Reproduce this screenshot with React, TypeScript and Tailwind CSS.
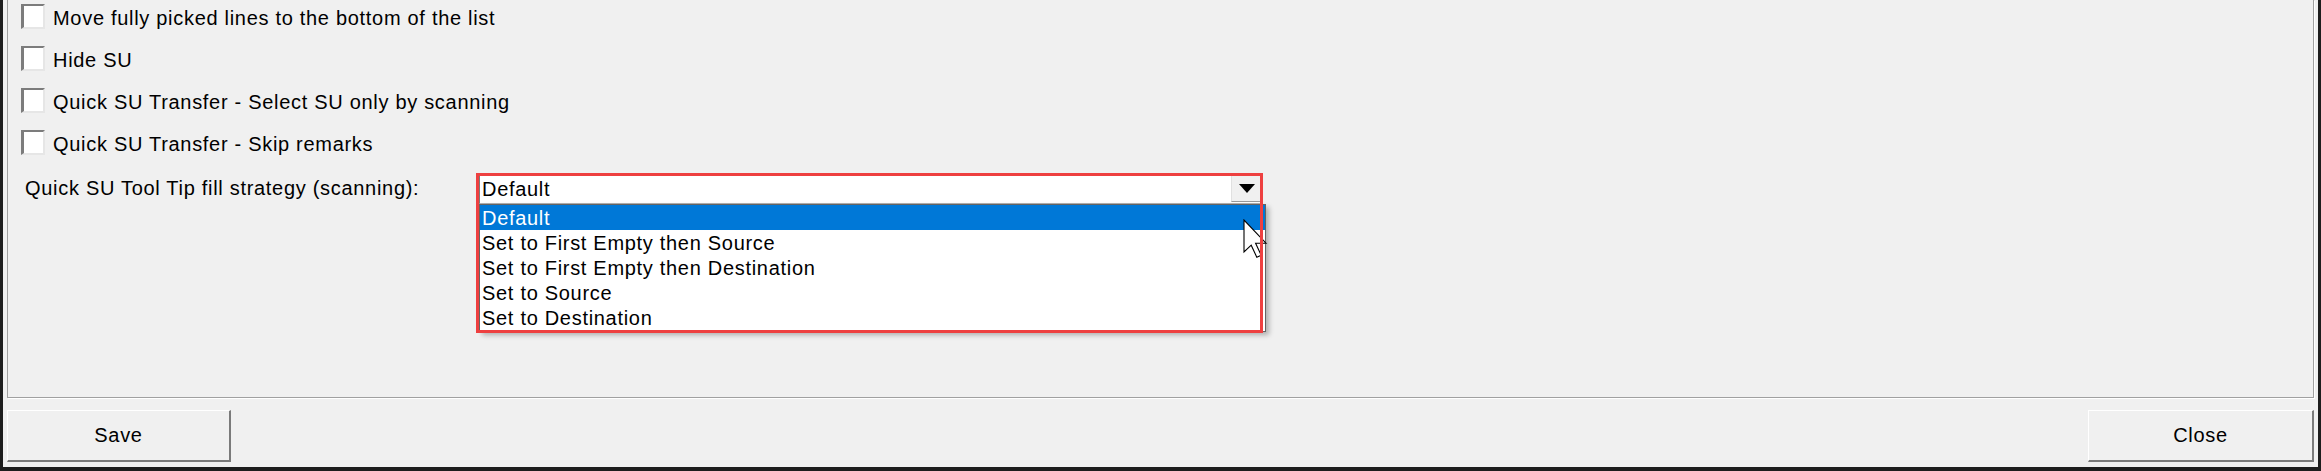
import React from "react";

const checkboxLabels = [
  "Move fully picked lines to the bottom of the list",
  "Hide SU",
  "Quick SU Transfer - Select SU only by scanning",
  "Quick SU Transfer - Skip remarks",
];

const strategyOptions = [
  "Default",
  "Set to First Empty then Source",
  "Set to First Empty then Destination",
  "Set to Source",
  "Set to Destination",
];

function CheckBox({ label }: { label: string }) {
  return (
    <div className="flex items-start h-[26px]">
      <div className="w-[24px] h-[25px] bg-white border-t-2 border-l-[3px] border-b-2 border-r-2 border-t-[#7c7c7c] border-l-[#7c7c7c] border-b-[#e6e6e6] border-r-[#e6e6e6]" />
      <span className="ml-[8px] pt-[3px] leading-[23px] whitespace-nowrap">{label}</span>
    </div>
  );
}

function ArrowCursor() {
  return (
    <svg width="26" height="40" viewBox="-0.5 -0.5 13 20" className="block">
      <path
        d="M0 0 L0 16 L3.6 12.6 L6.4 18.6 L8.6 17.6 L5.8 11.6 L11 11.6 Z"
        fill="#ffffff"
        stroke="#000000"
        strokeWidth="0.55"
        strokeLinejoin="miter"
      />
    </svg>
  );
}

function StrategyCombo() {
  return (
    <div className="relative w-[783px] h-[30px]">
      {/* closed combo field */}
      <div className="flex h-full bg-white border border-[#7a7a7a] border-b-[#b0b0b0]">
        <span className="flex-1 pl-[2px] pt-[3px] leading-[23px] whitespace-nowrap">Default</span>
        <div className="w-[30px] h-[27px] bg-[#f0f0f0] border-l border-l-[#e0e0e0] border-b border-b-[#9a9a9a] flex items-center justify-center">
          <svg width="16" height="9" viewBox="0 0 16 9">
            <path d="M0 0 H16 L8 9 Z" fill="#000" />
          </svg>
        </div>
      </div>

      {/* open dropdown list */}
      <div className="absolute left-0 top-[30px] w-[787px] h-[128px] bg-white border border-[#646464] shadow-[3px_3px_5px_rgba(0,0,0,0.28)] z-10">
        {strategyOptions.map((opt, i) => (
          <div
            key={opt}
            className={
              i === 0
                ? "h-[25px] pl-[2px] pt-[2px] leading-[23px] bg-[#0078d7] text-white whitespace-nowrap"
                : "h-[25px] pl-[2px] pt-[2px] leading-[23px] whitespace-nowrap"
            }
          >
            {opt}
          </div>
        ))}
      </div>

      {/* mouse pointer */}
      <div className="absolute left-[764px] top-[45px] z-20">
        <ArrowCursor />
      </div>

      {/* highlight frame */}
      <div className="absolute left-[-3px] top-[-1px] w-[787px] h-[160px] border-[3px] border-[#ee4040] z-30 pointer-events-none" />
    </div>
  );
}

function DialogButton({ label, width }: { label: string; width: string }) {
  return (
    <div
      className={`${width} h-[52px] bg-[#f0f0f0] border-t border-l border-white border-b-2 border-r-2 border-b-[#7a7a7a] border-r-[#7a7a7a] flex items-center justify-center`}
    >
      <span className="leading-[23px]">{label}</span>
    </div>
  );
}

export default function App() {
  return (
    <div className="w-[2321px] h-[471px] bg-[#1d1d1d] pl-[3px] pb-[4px] font-['Liberation_Sans',Arial,sans-serif] text-[20px] tracking-[0.7px] text-black">
      <div className="w-[2315px] h-[467px] bg-[#f0f0f0] px-[4px] flex flex-col">
        {/* options group */}
        <div className="h-[398px] border-l border-r border-b border-[#a0a0a0] shadow-[1px_1px_0_#ffffff]">
          <div className="pl-[13px] pt-[4px] flex flex-col gap-[16px]">
            {checkboxLabels.map((l) => (
              <CheckBox key={l} label={l} />
            ))}
          </div>
          <div className="pl-[13px] mt-[18px] flex items-start">
            <span className="w-[458px] pl-[4px] pt-[3px] leading-[23px] whitespace-nowrap">
              Quick SU Tool Tip fill strategy (scanning):
            </span>
            <StrategyCombo />
          </div>
        </div>

        {/* footer buttons */}
        <div className="mt-[12px] flex justify-between">
          <DialogButton label="Save" width="w-[224px]" />
          <DialogButton label="Close" width="w-[226px]" />
        </div>
      </div>
    </div>
  );
}
